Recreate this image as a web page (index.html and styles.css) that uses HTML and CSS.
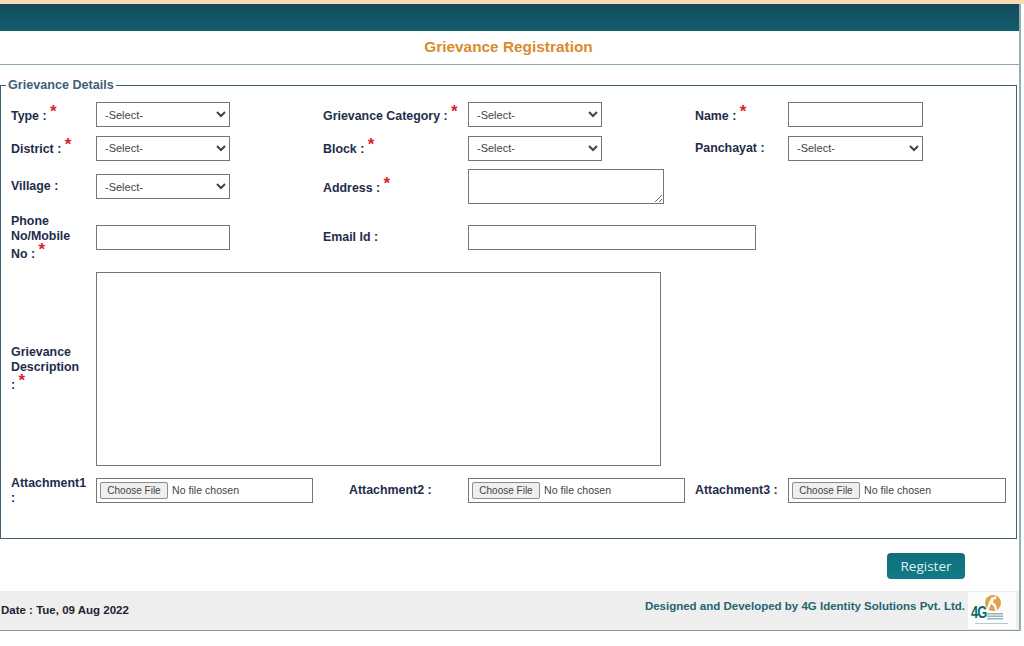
FILE: index.html
```html
<!DOCTYPE html>
<html lang="en">
<head>
    <meta charset="UTF-8">
    <title>Grievance Registration</title>
    <link rel="stylesheet" href="styles.css">
</head>
<body>
    <div class="topStrip"></div>
    <div class="page">
        <div class="headBar"></div>
        <h1 class="title">Grievance Registration</h1>
        <form class="regForm">
            <fieldset class="details">
                <legend>Grievance Details</legend>
                <div class="formGrid">
                    <label class="lbl">Type : <span class="req">*</span></label>
                    <select class="ctl"><option>-Select-</option></select>
                    <label class="lbl">Grievance Category : <span class="req">*</span></label>
                    <select class="ctl"><option>-Select-</option></select>
                    <label class="lbl">Name : <span class="req">*</span></label>
                    <input class="ctl lastCtl" type="text">

                    <label class="lbl">District : <span class="req">*</span></label>
                    <select class="ctl"><option>-Select-</option></select>
                    <label class="lbl">Block : <span class="req">*</span></label>
                    <select class="ctl"><option>-Select-</option></select>
                    <label class="lbl">Panchayat :</label>
                    <select class="ctl lastCtl"><option>-Select-</option></select>

                    <label class="lbl">Village :</label>
                    <select class="ctl"><option>-Select-</option></select>
                    <label class="lbl">Address : <span class="req">*</span></label>
                    <textarea class="addressBox"></textarea>

                    <label class="lbl firstCol">Phone No/Mobile No : <span class="req">*</span></label>
                    <input class="ctl" type="text">
                    <label class="lbl">Email Id :</label>
                    <input class="ctl emailBox" type="text">

                    <label class="lbl firstCol descLbl">Grievance Description : <span class="req">*</span></label>
                    <textarea class="descBox"></textarea>

                    <label class="lbl firstCol">Attachment1 :</label>
                    <input class="fileBox" type="file">
                    <label class="lbl attachTwo">Attachment2 :</label>
                    <input class="fileBox" type="file">
                    <label class="lbl">Attachment3 :</label>
                    <input class="fileBox fileLast" type="file">
                </div>
            </fieldset>
            <div class="actions">
                <button class="regBtn" type="button">Register</button>
            </div>
        </form>
        <div class="footer">
            <span class="dateText">Date : Tue, 09 Aug 2022</span>
            <span class="credit">Designed and Developed by 4G Identity Solutions Pvt. Ltd.</span>
            <div class="logo">
                <span class="logoText">4G</span>
                <svg class="logoMark" width="48" height="37" viewBox="0 0 48 37">
                    <circle cx="25" cy="11" r="8" fill="#dfa24a"/>
                    <path d="M24 5l2 1-1 4 3 3 1 5h-2l-1-4-3-2-2 5h-2l2-7z" fill="#fff"/>
                    <circle cx="27" cy="6" r="1.4" fill="#fff"/>
                    <rect x="19" y="21" width="16" height="1.5" fill="#8fb4ba"/>
                    <rect x="19" y="23.5" width="16" height="1.5" fill="#8fb4ba"/>
                    <rect x="19" y="26" width="16" height="1.5" fill="#8fb4ba"/>
                    <rect x="7" y="31" width="33" height="1" fill="#b5c8cb"/>
                </svg>
            </div>
        </div>
    </div>
</body>
</html>
```

FILE: styles.css
```css
html,body{margin: 0;padding: 0;background: #fff;}
body{font-family: "Liberation Sans",Arial,sans-serif;font-size: 12px;color: #1f2c4c;}

.topStrip{height: 4px;background: #fbdcb2;}
.page{width: 1019px;border-right: 2px solid #8fb1b6;border-bottom: 1px solid #7f9ea3;}
.headBar{height: 27px;background: linear-gradient(#14495a,#115f6d);}

.title{margin: 0;height: 33px;line-height: 32px;padding-right: 2px;text-align: center;font-size: 15.4px;font-weight: bold;color: #d98c2e;border-bottom: 1px solid #88a8ad;}

.regForm{padding-top: 13px;}
.details{margin: 0;padding: 0 0 35px 0;width: 1015px;border: 1px solid #3f6071;min-width: 0;}
.details legend{margin-left: 5px;padding: 0 2px;font-size: 12.6px;font-weight: bold;color: #3f5f78;}

.formGrid{display: grid;grid-template-columns: 85px 227px 145px 227px 93px 218px;grid-template-rows: 25px 24px 35px 49px 198px 25px;row-gap: 9px;align-items: center;padding: 10px 0 0 10px;}
.lbl{font-size: 12.4px;font-weight: bold;line-height: 15px;color: #1f2c4c;}
.firstCol{grid-column: 1;padding-right: 12px;}
.descLbl{margin-bottom: 2px;}
.req{color: #d8232a;font-size: 17px;line-height: 12px;vertical-align: 3px;}

.ctl{box-sizing: border-box;width: 134px;height: 25px;margin: 0;padding: 0 4px;font-family: "Liberation Sans",Arial,sans-serif;font-size: 11px;color: #444;background: #fff;border: 1px solid #767676;border-radius: 0;}
.lastCtl{width: 135px;}
.addressBox{box-sizing: border-box;width: 196px;height: 35px;margin: 0;border: 1px solid #767676;border-radius: 0;}
.emailBox{grid-column: span 3;width: 288px;}
.descBox{grid-column: span 5;box-sizing: border-box;width: 565px;height: 194px;margin: 1px 0 3px;align-self: start;border: 1px solid #767676;border-radius: 0;resize: none;}
.fileBox{box-sizing: border-box;width: 217px;height: 25px;margin: 0;padding: 3px;font-family: "Liberation Sans",Arial,sans-serif;font-size: 10.6px;color: #444;border: 1px solid #767676;}
.fileBox::file-selector-button{width: 68px;height: 17px;margin-right: 4px;padding: 0;font-size: 10px;color: #444;background: #efefef;border: 1px solid #8d8d8d;border-radius: 2px;}
.fileLast{width: 218px;}
.attachTwo{padding-left: 26px;}

.actions{display: flex;justify-content: flex-end;padding: 14px 54px 12px 0;}
.regBtn{width: 78px;height: 26px;padding: 0;font-family: "Open Sans",sans-serif;font-size: 13.5px;color: #dff2f3;background: linear-gradient(#0f6f7c,#127a85);border: 0;border-radius: 4px;}

.footer{display: flex;align-items: center;height: 39px;background: #eee;}
.dateText{padding-left: 1px;margin-top: -1px;font-size: 11.5px;font-weight: bold;color: #1d2430;}
.credit{margin-left: auto;margin-right: 3px;margin-top: -9px;font-size: 11.5px;font-weight: bold;color: #1f6470;}
.logo{position: relative;width: 48px;height: 37px;margin-right: 3px;background: #fcfcfc;}
.logoText{position: absolute;left: 3px;top: 12px;font-size: 16px;font-weight: bold;letter-spacing: -1px;color: #0f6a63;transform: scaleX(.8);transform-origin: left;}
.logoMark{display: block;}
```
